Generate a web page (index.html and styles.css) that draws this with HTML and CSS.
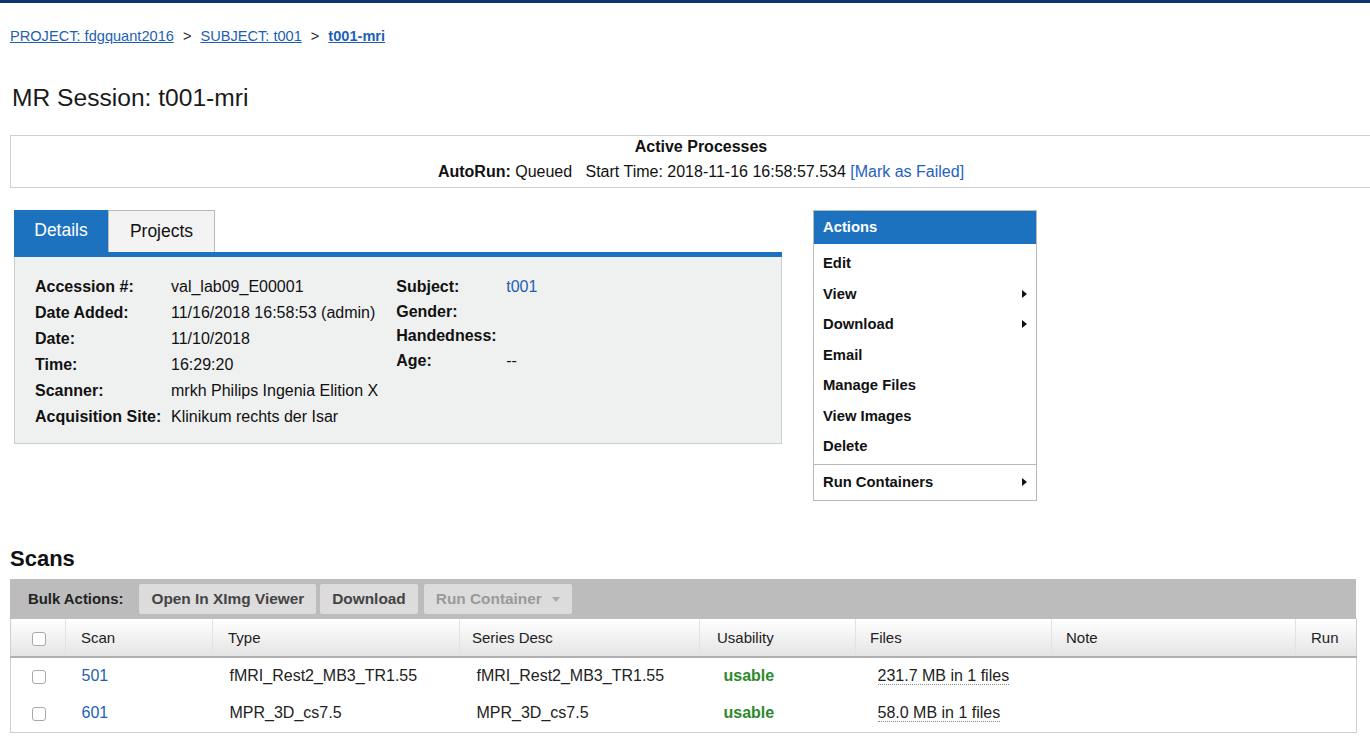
FILE: index.html
```html
<!DOCTYPE html>
<html>
<head>
<meta charset="utf-8">
<title>MR Session: t001-mri</title>
<link rel="stylesheet" href="styles.css">
</head>
<body>
<div class="topbar"></div>
<div class="breadcrumb">
  <a href="#">PROJECT: fdgquant2016</a><span class="sep">&gt;</span><a href="#">SUBJECT: t001</a><span class="sep">&gt;</span><a href="#" class="current">t001-mri</a>
</div>
<h1 class="page-title">MR Session: t001-mri</h1>

<div class="active-box">
  <div class="active-title">Active Processes</div>
  <div class="active-line"><b>AutoRun:</b> Queued&nbsp;&nbsp; Start Time: 2018-11-16 16:58:57.534 <a href="#" class="mark">[Mark as Failed]</a></div>
</div>

<div class="main">
  <div class="details">
    <div class="tabs">
      <div class="tab active">Details</div>
      <div class="tab">Projects</div>
    </div>
    <div class="tab-bar"></div>
    <div class="panel">
      <div class="info left">
        <div class="lbl">Accession #:</div><div class="val">val_lab09_E00001</div>
        <div class="lbl">Date Added:</div><div class="val">11/16/2018 16:58:53 (admin)</div>
        <div class="lbl">Date:</div><div class="val">11/10/2018</div>
        <div class="lbl">Time:</div><div class="val">16:29:20</div>
        <div class="lbl">Scanner:</div><div class="val">mrkh Philips Ingenia Elition X</div>
        <div class="lbl">Acquisition Site:</div><div class="val">Klinikum rechts der Isar</div>
      </div>
      <div class="info right">
        <div class="lbl">Subject:</div><div class="val"><a href="#">t001</a></div>
        <div class="lbl">Gender:</div><div class="val"></div>
        <div class="lbl">Handedness:</div><div class="val"></div>
        <div class="lbl">Age:</div><div class="val">--</div>
      </div>
    </div>
  </div>

  <div class="actions">
    <div class="actions-head">Actions</div>
    <ul class="menu">
      <li>Edit</li>
      <li>View<span class="arrow"></span></li>
      <li>Download<span class="arrow"></span></li>
      <li>Email</li>
      <li>Manage Files</li>
      <li>View Images</li>
      <li>Delete</li>
    </ul>
    <ul class="menu menu-last">
      <li>Run Containers<span class="arrow"></span></li>
    </ul>
  </div>
</div>

<h2 class="scans-title">Scans</h2>
<div class="scans">
  <div class="bulk">
    <span class="bulk-label">Bulk Actions:</span>
    <span class="btn">Open In XImg Viewer</span>
    <span class="btn">Download</span>
    <span class="btn disabled">Run Container <span class="caret"></span></span>
  </div>
  <table class="scan-table">
    <colgroup>
      <col class="c-check"><col class="c-scan"><col class="c-type"><col class="c-desc"><col class="c-use"><col class="c-files"><col class="c-note"><col class="c-run">
    </colgroup>
    <thead>
      <tr>
        <th class="chk"><span class="checkbox"></span></th>
        <th class="h-scan">Scan</th>
        <th class="h-type">Type</th>
        <th class="h-desc">Series Desc</th>
        <th class="h-use">Usability</th>
        <th class="h-files">Files</th>
        <th class="h-note">Note</th>
        <th class="h-run">Run</th>
      </tr>
    </thead>
    <tbody>
      <tr>
        <td class="chk"><span class="checkbox"></span></td>
        <td class="d-scan"><a href="#">501</a></td>
        <td class="d-type">fMRI_Rest2_MB3_TR1.55</td>
        <td class="d-desc">fMRI_Rest2_MB3_TR1.55</td>
        <td class="d-use">usable</td>
        <td class="d-files"><span class="files">231.7 MB in 1 files</span></td>
        <td></td>
        <td></td>
      </tr>
      <tr>
        <td class="chk"><span class="checkbox"></span></td>
        <td class="d-scan"><a href="#">601</a></td>
        <td class="d-type">MPR_3D_cs7.5</td>
        <td class="d-desc">MPR_3D_cs7.5</td>
        <td class="d-use">usable</td>
        <td class="d-files"><span class="files">58.0 MB in 1 files</span></td>
        <td></td>
        <td></td>
      </tr>
    </tbody>
  </table>
</div>
</body>
</html>
```

FILE: styles.css
```css
html, body {
  margin: 0;
  padding: 0;
  background: #fff;
  overflow: hidden;
}
body {
  font-family: "Liberation Sans", Arial, sans-serif;
  color: #222;
  width: 1370px;
  height: 740px;
}
a { color: #1d5fb6; text-decoration: none; }

.topbar {
  height: 3px;
  background: #0d3371;
}

.breadcrumb {
  margin-top: 24px;
  padding-left: 10px;
  font-size: 14.6px;
  line-height: 18px;
  height: 18px;
}
.breadcrumb a { text-decoration: underline; }
.breadcrumb .sep { margin: 0 9px; color: #222; }
.breadcrumb .current { font-weight: bold; }

.page-title {
  margin: 39px 0 0 0;
  padding-left: 12px;
  font-size: 24.6px;
  font-weight: normal;
  line-height: 28px;
  color: #1a1a1a;
}

.active-box {
  margin: 23px 0 0 10px;
  width: 1380px;
  border: 1px solid #cdd0d0;
  border-right: none;
  padding: 2px 0 5px;
  text-align: center;
  font-size: 16px;
  color: #111;
}
.active-title {
  font-weight: bold;
  line-height: 18px;
  height: 18px;
  margin-bottom: 6px;
}
.active-line { line-height: 20px; }
.active-line .mark { color: #2462c0; }

.main {
  display: flex;
  align-items: flex-start;
  margin-top: 22px;
  padding-left: 14px;
}
.details { width: 768px; }
.tabs { display: flex; height: 42px; }
.tab {
  box-sizing: border-box;
  height: 42px;
  line-height: 40px;
  font-size: 17.5px;
  text-align: center;
  color: #111;
}
.tab.active {
  width: 94px;
  background: #1d72c0;
  color: #fff;
}
.tab:not(.active) {
  width: 107px;
  background: #f3f3f3;
  border: 1px solid #b9b9b9;
  border-bottom: none;
}
.tab-bar {
  height: 5px;
  background: #1d72c0;
}
.panel {
  box-sizing: border-box;
  height: 187px;
  background: #eff0f0;
  border: 1px solid #cdcfcf;
  border-top: none;
  padding: 17px 20px 0 20px;
  display: flex;
  align-items: flex-start;
}
.info {
  display: grid;
  font-size: 16px;
  color: #111;
}
.info.left {
  grid-template-columns: 136px auto;
  grid-auto-rows: 26px;
  line-height: 26px;
}
.info.right {
  margin-left: 18px;
  grid-template-columns: 110px auto;
  grid-auto-rows: 24.5px;
  line-height: 26px;
}
.info .lbl { font-weight: bold; }

.actions {
  box-sizing: border-box;
  margin-left: 31px;
  width: 224px;
  border: 1px solid #b8b8b8;
  background: #fff;
}
.actions-head {
  height: 33px;
  line-height: 33px;
  background: #1d72c0;
  color: #fff;
  font-weight: bold;
  font-size: 14.8px;
  padding-left: 9px;
}
.menu {
  list-style: none;
  margin: 0;
  padding: 4px 0 2px;
  border-bottom: 1px solid #b8b8b8;
}
.menu li {
  position: relative;
  height: 30.5px;
  line-height: 30.5px;
  padding-left: 9px;
  font-size: 14.8px;
  font-weight: bold;
  color: #111;
}
.menu-last { border-bottom: none; padding: 2px 0 2px; }
.menu-last li { height: 31px; line-height: 31px; }
.arrow {
  position: absolute;
  right: 9px;
  top: 50%;
  margin-top: -4px;
  width: 0;
  height: 0;
  border-top: 4px solid transparent;
  border-bottom: 4px solid transparent;
  border-left: 5px solid #111;
}

.scans-title {
  margin: 45px 0 0 0;
  padding-left: 10px;
  font-size: 22px;
  line-height: 26px;
  font-weight: bold;
  color: #111;
}
.scans {
  margin: 7px 0 0 10px;
  width: 1346px;
}
.bulk {
  box-sizing: border-box;
  height: 40px;
  background: #bcbcbc;
  display: flex;
  align-items: center;
  padding-left: 18px;
  gap: 4px;
}
.bulk-label {
  font-size: 14.9px;
  font-weight: bold;
  color: #222;
  margin-right: 12px;
}
.btn {
  height: 30px;
  line-height: 30px;
  padding: 0 12px;
  background: #dcdcdc;
  border-radius: 2px;
  font-size: 15.4px;
  font-weight: bold;
  color: #444;
}
.btn.disabled { color: #9a9a9a; margin-left: 2px; }
.caret {
  display: inline-block;
  width: 0;
  height: 0;
  margin-left: 6px;
  vertical-align: middle;
  border-left: 4px solid transparent;
  border-right: 4px solid transparent;
  border-top: 5px solid #aaa;
}

.scan-table {
  width: 1346px;
  border-collapse: collapse;
  table-layout: fixed;
  font-size: 16px;
  border-left: 1px solid #cfcfcf;
  border-right: 1px solid #cfcfcf;
  border-bottom: 1px solid #cfcfcf;
}
.c-check { width: 55px; }
.c-scan { width: 147px; }
.c-type { width: 247px; }
.c-desc { width: 240px; }
.c-use { width: 156px; }
.c-files { width: 196px; }
.c-note { width: 244px; }
.c-run { width: 61px; }
.scan-table th {
  height: 38px;
  box-sizing: border-box;
  text-align: left;
  font-size: 15px;
  font-weight: normal;
  color: #222;
  background: linear-gradient(#ffffff, #e4e4e4);
  border-bottom: 2px solid #b0b0b0;
  border-left: 1px solid #e2e2e2;
  padding: 0;
}
.scan-table th:first-child { border-left: none; }
.h-scan { padding-left: 15px !important; }
.h-type { padding-left: 15px !important; }
.h-desc { padding-left: 12px !important; }
.h-use { padding-left: 17px !important; }
.h-files { padding-left: 14px !important; }
.h-note { padding-left: 14px !important; }
.h-run { padding-left: 15px !important; }
.scan-table td {
  height: 37px;
  padding: 0;
  color: #222;
}
.chk { text-align: left; }
.checkbox {
  display: inline-block;
  box-sizing: border-box;
  width: 14px;
  height: 14px;
  margin-left: 21px;
  border: 1px solid #a9a9a9;
  border-radius: 3px;
  background: #fff;
  vertical-align: middle;
}
.d-scan { padding-left: 16px !important; }
.d-type { padding-left: 17px !important; }
.d-desc { padding-left: 17px !important; }
.d-use { padding-left: 24px !important; font-weight: bold; color: #2c8a2c !important; }
.d-files { padding-left: 22px !important; }
.files { border-bottom: 1px dotted #888; }
```
